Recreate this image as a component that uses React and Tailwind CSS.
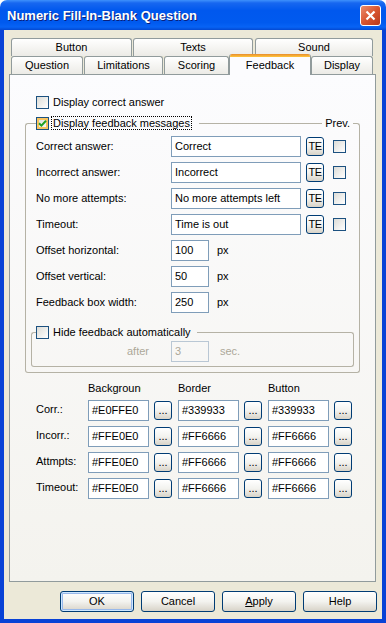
import React from "react";

const LINE = "border-[#B5B2A5]";

const Check = ({ checked = false, hot = false }) => (
  <span
    className={`flex h-[13px] w-[13px] shrink-0 items-center justify-center border border-[#1C5180] bg-linear-to-br from-[#DCDCD7] to-white ${
      hot ? "shadow-[inset_0_0_0_2px_#F9C45E]" : ""
    }`}
  >
    {checked && (
      <svg width="9" height="9" viewBox="0 0 9 9">
        <path d="M1 4.2 L3.4 6.6 L8 1.8" fill="none" stroke="#21A121" strokeWidth="2" />
      </svg>
    )}
  </span>
);

const TextBox = ({ value, w, disabled = false }) => (
  <div
    className={`flex h-[21px] shrink-0 items-center overflow-hidden whitespace-nowrap border pl-[3px] ${w} ${
      disabled ? "border-[#B9C7D4] text-[#ACA899]" : "border-[#7F9DB9] bg-white"
    }`}
  >
    {value}
  </div>
);

const XpButton = ({ children, className = "" }) => (
  <div
    className={`flex shrink-0 items-center justify-center rounded-[3px] border border-[#003C74] bg-linear-to-b from-white via-[#F3F3EF] to-[#D8D3C8] ${className}`}
  >
    {children}
  </div>
);

const Tab = ({ label, w, className = "" }) => (
  <div
    className={`flex h-full shrink-0 items-center justify-center rounded-t-[3px] border-x border-t border-[#919B9C] bg-linear-to-b from-white to-[#ECEBE6] ${w} ${className}`}
  >
    {label}
  </div>
);

const GroupHead = ({ lead, children, right = null }) => (
  <div className="flex h-[14px]">
    <div className={`mt-[7px] shrink-0 rounded-tl-[3px] border-l border-t ${LINE} ${lead}`} />
    {children}
    <div className={`mt-[7px] flex-1 border-t ${LINE}`} />
    {right}
    <div className={`mt-[7px] w-[7px] shrink-0 rounded-tr-[3px] border-r border-t ${LINE}`} />
  </div>
);

const messages = [
  ["Correct answer:", "Correct"],
  ["Incorrect answer:", "Incorrect"],
  ["No more attempts:", "No more attempts left"],
  ["Timeout:", "Time is out"],
];

const offsets = [
  ["Offset horizontal:", "100"],
  ["Offset vertical:", "50"],
  ["Feedback box width:", "250"],
];

const colors = [
  ["Corr.:", "#E0FFE0", "#339933", "#339933"],
  ["Incorr.:", "#FFE0E0", "#FF6666", "#FF6666"],
  ["Attmpts:", "#FFE0E0", "#FF6666", "#FF6666"],
  ["Timeout:", "#FFE0E0", "#FF6666", "#FF6666"],
];

export default function App() {
  return (
    <div className="flex h-[623px] w-[386px] flex-col overflow-hidden font-['Liberation_Sans',Arial,sans-serif] text-[11px] leading-none text-black">
      {/* title bar */}
      <div className="flex h-[30px] shrink-0 items-center rounded-t-[7px] bg-[linear-gradient(180deg,#3E91FC_0%,#1767F0_10%,#0058EE_35%,#005AEF_75%,#0763F5_90%,#0349D2_100%)] pl-[7px] pr-[5px]">
        <span className="flex-1 text-[13px] font-bold text-white [text-shadow:1px_1px_0_#0A1F7A]">
          Numeric Fill-In-Blank Question
        </span>
        <div className="flex h-[21px] w-[21px] items-center justify-center rounded-[3px] border border-white bg-linear-to-br from-[#EA8C6C] via-[#D9552F] to-[#B8381B]">
          <svg width="11" height="11" viewBox="0 0 11 11">
            <path d="M1.5 1.5 L9.5 9.5 M9.5 1.5 L1.5 9.5" stroke="white" strokeWidth="2.2" />
          </svg>
        </div>
      </div>

      {/* window body */}
      <div className="flex flex-1 flex-col border-x-4 border-b-4 border-[#0842D6] bg-[#ECE9D8] pl-[5px] pt-[8px]">
        {/* tabs */}
        <div className="flex h-[18px] pl-[2px]">
          <Tab label="Button" w="w-[121px]" />
          <Tab label="Texts" w="w-[120px]" className="ml-[1px]" />
          <Tab label="Sound" w="w-[118px]" className="ml-[2px]" />
        </div>
        <div className="flex h-[18px] items-start pl-[2px]">
          <Tab label="Question" w="w-[72px]" />
          <Tab label="Limitations" w="w-[79px]" className="ml-[1px]" />
          <Tab label="Scoring" w="w-[65px]" className="ml-[1px]" />
          <div className="relative z-10 -mt-[2px] flex h-[21px] w-[82px] shrink-0 flex-col overflow-hidden rounded-t-[3px] border-x border-[#919B9C] bg-[#FCFCFE]">
            <div className="h-[3px] bg-linear-to-b from-[#E68B2C] to-[#FFC73C]" />
            <div className="flex flex-1 items-start justify-center pt-[3px]">Feedback</div>
          </div>
          <Tab label="Display" w="w-[62px]" />
        </div>

        {/* panel */}
        <div className="flex h-[508px] w-[367px] flex-col border border-[#919B9C] bg-linear-to-b from-[#FCFCFE] to-[#F4F3EE] pl-[15px] pt-[20px]">
          <div className="ml-[11px] flex h-[14px] items-center">
            <Check />
            <span className="ml-[4px]">Display correct answer</span>
          </div>

          {/* feedback group */}
          <div className="mt-[7px] w-[335px]">
            <GroupHead
              lead="w-[11px]"
              right={<span className="px-[3px] pt-[2px]">Prev.</span>}
            >
              <div className="flex items-center">
                <Check checked hot />
                <span className="ml-[2px] flex h-[14px] items-center border border-dotted border-black px-[1px]">
                  Display feedback messages
                </span>
                <span className="w-[7px]" />
              </div>
            </GroupHead>
            <div className={`flex flex-col gap-[5px] rounded-b-[3px] border-x border-b ${LINE} px-[10px] pb-[5px] pt-[6px]`}>
              {messages.map(([label, value]) => (
                <div key={label} className="flex h-[21px] items-center">
                  <span className="w-[135px] shrink-0">{label}</span>
                  <TextBox value={value} w="w-[130px]" />
                  <XpButton className="ml-[5px] h-[19px] w-[18px] text-[11px] tracking-[-0.5px]">TE</XpButton>
                  <span className="ml-[9px]">
                    <Check />
                  </span>
                </div>
              ))}
              {offsets.map(([label, value]) => (
                <div key={label} className="flex h-[21px] items-center">
                  <span className="w-[135px] shrink-0">{label}</span>
                  <TextBox value={value} w="w-[38px]" />
                  <span className="ml-[8px]">px</span>
                </div>
              ))}

              {/* hide feedback group */}
              <div className="-mx-[5px] mt-[7px]">
                <GroupHead lead="w-[5px]">
                  <div className="flex items-center">
                    <Check />
                    <span className="ml-[4px]">Hide feedback automatically</span>
                    <span className="w-[6px]" />
                  </div>
                </GroupHead>
                <div className={`flex items-center rounded-b-[3px] border-x border-b ${LINE} pb-[4px] pl-[95px] pt-[2px] text-[#ACA899]`}>
                  <span className="w-[44px]">after</span>
                  <TextBox value="3" w="w-[38px]" disabled />
                  <span className="ml-[11px]">sec.</span>
                </div>
              </div>
            </div>
          </div>

          {/* colours */}
          <div className="ml-[11px] mt-[8px] flex h-[14px] items-center pl-[52px]">
            <span className="w-[53px] overflow-hidden whitespace-nowrap">Background</span>
            <span className="ml-[37px] w-[90px]">Border</span>
            <span>Button</span>
          </div>
          <div className="ml-[11px] mt-[5px] flex flex-col gap-[5px]">
            {colors.map(([label, ...vals]) => (
              <div key={label} className="flex h-[21px] items-center">
                <span className="-mt-[3px] w-[52px] shrink-0">{label}</span>
                {vals.map((v, i) => (
                  <div key={i} className="flex items-center">
                    <TextBox value={v} w="w-[61px]" />
                    <XpButton className="ml-[5px] mr-[6px] h-[19px] w-[18px] items-end pb-[3px]">...</XpButton>
                  </div>
                ))}
              </div>
            ))}
          </div>
        </div>

        {/* dialog buttons */}
        <div className="mt-[9px] flex gap-[7px] pl-[51px]">
          <XpButton className="h-[21px] w-[74px] shadow-[inset_0_0_0_1px_#CEE7FF,inset_0_0_0_2px_#98B8EA]">OK</XpButton>
          <XpButton className="h-[21px] w-[74px]">Cancel</XpButton>
          <XpButton className="h-[21px] w-[74px]">
            <span>
              <span className="underline">A</span>pply
            </span>
          </XpButton>
          <XpButton className="h-[21px] w-[74px]">Help</XpButton>
        </div>
      </div>
    </div>
  );
}
